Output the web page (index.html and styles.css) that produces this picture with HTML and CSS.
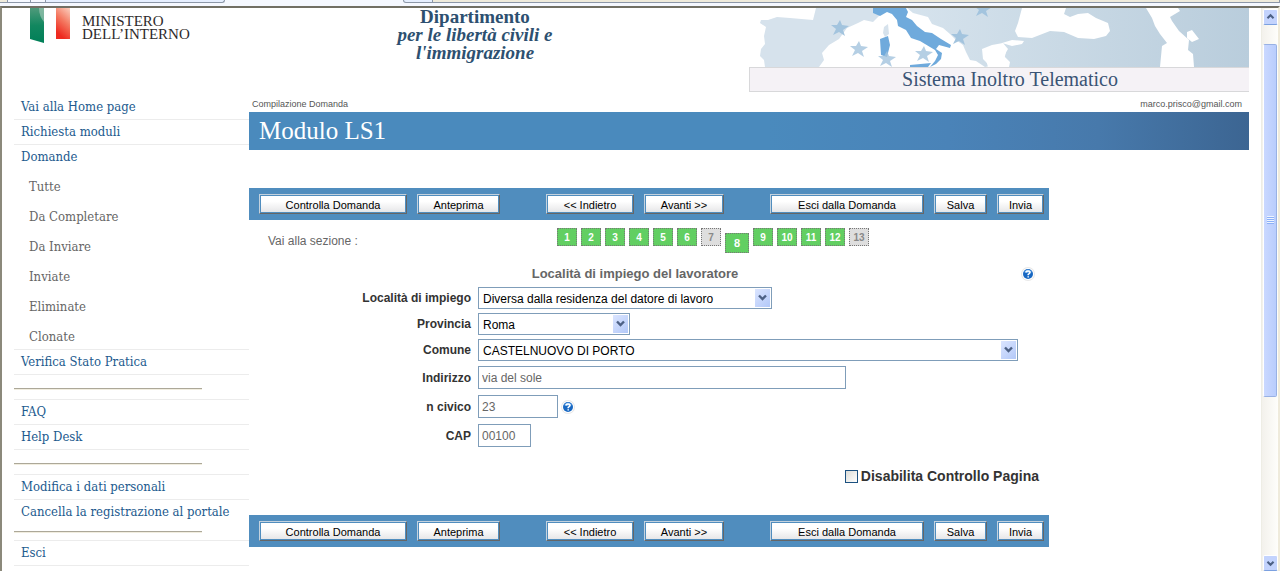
FILE: index.html
```html
<!DOCTYPE html>
<html lang="it">
<head>
<meta charset="utf-8">
<title>Modulo LS1 - Sistema Inoltro Telematico</title>
<link rel="stylesheet" href="styles.css">
</head>
<body>
<div class="tabstrip">
  <span class="tab tab-first"></span><span class="tab tab-small"></span><span class="tab tab-mini"></span><span class="tab tab-active"></span><span class="tab tab-space"></span><span class="tab tab-tool"></span><span class="tab tab-rest"></span>
</div>
<div class="frame">
  <div class="page">
    <header class="header">
      <div class="ministry">
        <svg class="flag" width="42" height="38" viewBox="0 0 42 38" aria-hidden="true">
          <defs>
            <linearGradient id="green" x1="0" y1="0" x2="0" y2="1"><stop offset="0" stop-color="#4f9a7b"/><stop offset=".5" stop-color="#12875f"/><stop offset="1" stop-color="#007f58"/></linearGradient>
            <linearGradient id="red" x1="1" y1="0" x2=".6" y2="1"><stop offset="0" stop-color="#fbd0c0"/><stop offset=".5" stop-color="#f47a62"/><stop offset="1" stop-color="#ee2a20"/></linearGradient>
          </defs>
          <path d="M0 0H14V35L0 31Z" fill="url(#green)"/>
          <path d="M9 0H14V14Q9 8 9 0Z" fill="#a9cdbd" opacity=".6"/>
          <path d="M26 0H40V31H26Z" fill="url(#red)"/>
        </svg>
        <div class="ministry-name">MINISTERO<br>DELL’INTERNO</div>
      </div>
      <div class="department">Dipartimento<br><em>per le libertà civili e<br>l'immigrazione</em></div>
      <div class="banner">
        <svg class="map" viewBox="749 8 500 59" preserveAspectRatio="none" aria-hidden="true">
          <defs>
            <linearGradient id="east" x1="0" x2="1"><stop offset="0" stop-color="#d6e3ed"/><stop offset=".45" stop-color="#c9d9e5"/><stop offset="1" stop-color="#b9cddc"/></linearGradient>
            <path id="star" d="M0-8 2-3 9-2 3 2 5 8-1 4-7 7-4 1-9-3-3-3Z"/>
          </defs>
          <path fill="#d6e2ec" d="M816 8 813 20 790 18 777 17 768 20 761 20 760 23 766 27 764 36 765 44 761 49 760 56 764 60 765 67H819L824 60 822 53 829 45 839 39 847 28 858 23 864 20 873 22 879 16 882 8Z"/>
          <path fill="url(#east)" d="M907 8 913 13 928 17 932 24 943 28 950 34 956 40 963 45 966 52 970 60 976 61 985 67 990 66 983 59 982 49 992 45 1003 43 1008 49 1004 56 1010 62 1009 67H1249V8Z"/>
          <path fill="#fff" d="M1022 8 1018 23 1015 31 1018 37 1032 38 1050 31 1064 32 1078 38 1094 39 1106 36 1110 31 1108 23 1096 18 1088 13 1078 14 1070 17 1064 14 1066 8ZM1002 43 1012 40 1024 41 1022 44 1012 46ZM1146 8 1152 18 1155 26 1160 34 1167 43 1162 46 1160 67H1194L1193 54 1188 50 1189 40 1179 31 1172 21 1170 17 1180 11 1178 8ZM1187 32 1192 30 1199 39 1192 42 1187 38Z"/>
          <path fill="#fff" d="M983 50 992 49 1003 43 1006 52 1004 60 1008 67H988Z"/>
          <path fill="#d6e2ec" d="M884 27 888 24 889 34 885 37 883 33Z"/>
          <path fill="#6faadc" d="M873 8 873 13 880 16 887 12 892 14 897 20 898 26 906 30 911 38 920 41 930 47 935 50 938 55 935 61 930 67 936 64 941 59 942 53 936 49 939 45 950 48 951 45 941 39 932 33 925 32 917 26 912 20 906 17 908 12 906 8ZM880 39 888 36 890 45 887 57 881 55ZM910 65 931 63 928 67H910Z"/>
          <g fill="#a3c4de"><use href="#star" x="840" y="28"/><use href="#star" x="960" y="37"/><use href="#star" x="983" y="9"/><g opacity=".8"><use href="#star" x="859" y="49"/><use href="#star" x="887" y="59"/><use href="#star" x="924" y="54"/></g></g>
        </svg>
        <div class="banner-title">Sistema Inoltro Telematico</div>
      </div>
    </header>
    <div class="columns">
      <nav class="menu">
        <a href="#">Vai alla Home page</a>
        <a href="#">Richiesta moduli</a>
        <a class="open" href="#">Domande</a>
        <div class="submenu">
          <a href="#">Tutte</a>
          <a href="#">Da Completare</a>
          <a href="#">Da Inviare</a>
          <a href="#">Inviate</a>
          <a href="#">Eliminate</a>
          <a href="#">Clonate</a>
        </div>
        <a href="#">Verifica Stato Pratica</a>
        <div class="divider"><hr></div>
        <a href="#">FAQ</a>
        <a href="#">Help Desk</a>
        <div class="divider"><hr></div>
        <a href="#">Modifica i dati personali</a>
        <a class="open" href="#">Cancella la registrazione al portale</a>
        <div class="divider divider-short"><hr></div>
        <a href="#">Esci</a>
      </nav>
      <main class="main">
        <div class="crumbs"><span>Compilazione Domanda</span><span>marco.prisco@gmail.com</span></div>
        <h1 class="title">Modulo LS1</h1>
        <form class="form">
          <div class="toolbar">
            <div class="group"><button type="button" class="w-check">Controlla Domanda</button><button type="button" class="w-preview">Anteprima</button></div>
            <div class="group"><button type="button" class="w-back">&lt;&lt; Indietro</button><button type="button" class="w-next">Avanti &gt;&gt;</button></div>
            <div class="group"><button type="button" class="w-exit">Esci dalla Domanda</button><button type="button" class="w-save">Salva</button><button type="button" class="w-send">Invia</button></div>
          </div>
          <div class="sections">
            <span class="sections-label">Vai alla sezione :</span>
            <div class="steps">
              <a href="#">1</a><a href="#">2</a><a href="#">3</a><a href="#">4</a><a href="#">5</a><a href="#">6</a><a class="off" href="#">7</a><a class="current" href="#">8</a><a href="#">9</a><a href="#">10</a><a href="#">11</a><a href="#">12</a><a class="off" href="#">13</a>
            </div>
          </div>
          <div class="subject">
            <h2>Località di impiego del lavoratore</h2>
            <svg class="help" viewBox="0 0 14 14" role="img" aria-label="Aiuto"><circle cx="7" cy="7" r="7" fill="#e8e8e8"/><circle cx="7" cy="7" r="6" fill="#fff"/><circle cx="7" cy="7" r="5" fill="#1767c2"/><path d="M3 5Q7 0 11 5Q7 7 3 5Z" fill="#5fa5e8"/><path d="M5 5.5Q5 4 7 4T9 5.6Q9 6.4 7.2 7.4V8.2M7.2 9.2V10.6" fill="none" stroke="#fff" stroke-width="1.5"/></svg>
          </div>
          <div class="field">
            <label for="luogo">Località di impiego</label>
            <span class="select w-place"><select id="luogo"><option>Diversa dalla residenza del datore di lavoro</option></select><svg class="arrow" viewBox="0 0 15 18" aria-hidden="true"><path d="M4 6.5 7.5 10 11 6.5" /></svg></span>
          </div>
          <div class="field">
            <label for="provincia">Provincia</label>
            <span class="select w-province"><select id="provincia"><option>Roma</option></select><svg class="arrow" viewBox="0 0 15 18" aria-hidden="true"><path d="M4 6.5 7.5 10 11 6.5" /></svg></span>
          </div>
          <div class="field">
            <label for="comune">Comune</label>
            <span class="select w-town"><select id="comune"><option>CASTELNUOVO DI PORTO</option></select><svg class="arrow" viewBox="0 0 15 18" aria-hidden="true"><path d="M4 6.5 7.5 10 11 6.5" /></svg></span>
          </div>
          <div class="field field-text">
            <label for="indirizzo">Indirizzo</label>
            <input class="w-street" type="text" id="indirizzo" value="via del sole">
          </div>
          <div class="field field-text">
            <label for="civico">n civico</label>
            <input class="w-number" type="text" id="civico" value="23">
            <svg class="help help-inline" viewBox="0 0 14 14" role="img" aria-label="Aiuto"><circle cx="7" cy="7" r="7" fill="#e8e8e8"/><circle cx="7" cy="7" r="6" fill="#fff"/><circle cx="7" cy="7" r="5" fill="#1767c2"/><path d="M3 5Q7 0 11 5Q7 7 3 5Z" fill="#5fa5e8"/><path d="M5 5.5Q5 4 7 4T9 5.6Q9 6.4 7.2 7.4V8.2M7.2 9.2V10.6" fill="none" stroke="#fff" stroke-width="1.5"/></svg>
          </div>
          <div class="field field-text">
            <label for="cap">CAP</label>
            <input class="w-zip" type="text" id="cap" value="00100">
          </div>
          <div class="disable"><input type="checkbox" id="disabilita"><label for="disabilita">Disabilita Controllo Pagina</label></div>
          <div class="toolbar">
            <div class="group"><button type="button" class="w-check">Controlla Domanda</button><button type="button" class="w-preview">Anteprima</button></div>
            <div class="group"><button type="button" class="w-back">&lt;&lt; Indietro</button><button type="button" class="w-next">Avanti &gt;&gt;</button></div>
            <div class="group"><button type="button" class="w-exit">Esci dalla Domanda</button><button type="button" class="w-save">Salva</button><button type="button" class="w-send">Invia</button></div>
          </div>
        </form>
      </main>
    </div>
  </div>
  <div class="scrollbar" aria-hidden="true">
    <svg class="scroll-btn" viewBox="0 0 15 15"><path d="M4 9 7.5 5.5 11 9"/></svg>
    <div class="track"><div class="thumb"><span class="grip"></span></div></div>
    <svg class="scroll-btn" viewBox="0 0 15 15"><path d="M4 6 7.5 9.5 11 6"/></svg>
  </div>
</div>
</body>
</html>
```
FILE: styles.css
```css
* { box-sizing: border-box; }

body {
  margin: 0;
  height: 100vh;
  overflow: hidden;
  display: flex;
  flex-direction: column;
  background: #fff;
  color: #666;
  font: 12px/16px "Liberation Sans", Arial, sans-serif;
}

a { text-decoration: none; }

/* Browser chrome above the page */
.tabstrip { display: flex; flex: none; height: 6px; padding-bottom: 3px; background: #f5f8ff; }
.tab { border-bottom: 1px solid #8c97a8; border-right: 1px solid #8c97a8; background: #e6efff; }
.tab-first { width: 8px; background: #efebdc; }
.tab-small { width: 23px; background: #f5f8ff; }
.tab-mini { width: 15px; background: #f5f8ff; }
.tab-active { width: 179px; border-radius: 0 0 3px 0; }
.tab-space { width: 178px; border: 0; background: #f5f8ff; }
.tab-tool { width: 30px; border-left: 1px solid #8c97a8; border-radius: 0 0 0 3px; }
.tab-rest { flex: 1; background: #efebdc; }

.frame {
  flex: 1;
  min-height: 0;
  display: flex;
  border-top: 2px solid #716f64;
  border-left: 2px solid #8b897b;
  border-right: 2px solid #efebdc;
}
.page { flex: 1; min-width: 0; padding: 0 12px; overflow: hidden; }

/* Header */
.header { display: flex; height: 87px; }
.ministry { display: flex; width: 364px; padding-left: 16px; gap: 10px; }
.flag { flex: none; }
.ministry-name { padding-top: 7px; font: 15px/13px "Liberation Serif", serif; color: #2e2a2b; }
.department {
  width: 194px;
  text-align: center;
  white-space: nowrap;
  font: bold 19px/18px "Liberation Serif", serif;
  color: #2d5070;
}
.banner { width: 500px; margin-left: auto; }
.map { display: block; width: 100%; height: 59px; }
.banner-title {
  height: 25px;
  padding-right: 131px;
  border: 1px solid #d8d8da;
  border-right: 0;
  background: #f5f2f6;
  text-align: right;
  font: 20px/23px "Liberation Serif", serif;
  color: #3a5475;
}

/* Left menu */
.columns { display: flex; }
.menu { flex: none; width: 235px; font: 13px/24px "DejaVu Serif Condensed", "DejaVu Serif", serif; }
.menu a { display: block; height: 25px; padding-left: 7px; border-bottom: 1px solid #ececec; color: #225a8e; white-space: nowrap; }
.menu .open { border-bottom: 0; }
.submenu { border-bottom: 1px solid #ececec; line-height: 30px; }
.submenu a { height: 30px; padding-left: 15px; border-bottom: 0; color: #666; }
.submenu a:first-child { margin-top: 2px; }
.submenu a:last-child { height: 27px; }
.divider { height: 25px; padding-top: 13px; border-bottom: 1px solid #ececec; }
.divider-short { height: 16px; padding-top: 6px; }
.divider hr { width: 80%; height: 2px; margin: 0; border: 0; border-top: 1px solid #aca899; background: #f1eddf; }

/* Main column */
.main { flex: 1; min-width: 0; }
.crumbs { display: flex; justify-content: space-between; height: 17px; padding: 0 7px 0 3px; font-size: 9px; line-height: 19px; color: #555; }
.title {
  height: 38px;
  margin: 0 0 38px;
  padding-left: 10px;
  background: linear-gradient(90deg, #4a8abd 0 52%, #4a83b8 70%, #4779ab 85%, #3c6592);
  color: #fff;
  font: 25px/38px "Liberation Serif", serif;
}
.form { width: 80%; }
.toolbar { display: flex; justify-content: space-between; height: 32px; padding: 6px 5px 6px 10px; background: #508dbe; }
.group { display: flex; gap: 10px; }
.toolbar button {
  height: 20px;
  padding: 3px 0 0;
  border: 1px solid;
  border-color: #c4d2de #666 #666 #c4d2de;
  box-shadow: inset 0 0 0 1px #508dbe;
  background: linear-gradient(#fff 35%, #e4e4e6);
  color: #000;
  font: 11px/13px "Liberation Sans", Arial, sans-serif;
}
.w-check { width: 148px; }
.w-preview { width: 83px; }
.w-back { width: 88px; }
.w-next { width: 80px; }
.w-exit { width: 154px; }
.w-save { width: 53px; }
.w-send { width: 47px; }

.sections { display: flex; height: 42px; padding-top: 8px; }
.sections-label { width: 308px; padding: 5px 0 0 19px; }
.steps { display: flex; gap: 4px; align-items: flex-start; }
.steps a {
  width: 20px;
  height: 18px;
  border: 1px dotted #777;
  background: #62cf62;
  color: #fff;
  font-weight: bold;
  font-size: 10px;
  line-height: 17px;
  text-align: center;
}
.steps .off { background: #dedede; color: #888; }
.steps .current { width: 24px; height: 20px; margin-top: 5px; font-size: 11px; line-height: 19px; }

.subject { display: flex; align-items: center; height: 23px; padding-right: 14px; }
.subject h2 { flex: 1; margin: 0; text-align: center; font-size: 13px; line-height: 16px; }
.help { flex: none; width: 14px; height: 14px; }
.help-inline { margin-left: 3px; }

.field { display: flex; align-items: center; height: 26px; }
.field-text { height: 29px; }
.field label { width: 222px; margin-right: 7px; text-align: right; font-weight: bold; color: #333; }
.select { position: relative; height: 22px; }
.select select {
  appearance: none;
  width: 100%;
  height: 22px;
  margin: 0;
  padding: 1px 20px 0 4px;
  border: 1px solid #7f9db9;
  border-radius: 0;
  background: #fff;
  color: #000;
  font: 12px/18px "Liberation Sans", Arial, sans-serif;
}
.arrow { position: absolute; top: 2px; right: 2px; width: 15px; height: 18px; background: linear-gradient(135deg, #dbe5ff, #b2c8f8); pointer-events: none; }
.arrow path, .scroll-btn path { fill: none; stroke: #4d6185; stroke-width: 2.4; }
.field input {
  height: 23px;
  padding: 0 3px;
  border: 1px solid #7f9db9;
  background: #fff;
  color: #666;
  font: 12px/18px "Liberation Sans", Arial, sans-serif;
}
.w-place { width: 294px; }
.w-province { width: 152px; }
.w-town { width: 540px; }
.field .w-street { width: 368px; }
.field .w-number { width: 80px; }
.field .w-zip { width: 53px; }

.disable { display: flex; align-items: center; justify-content: flex-end; gap: 3px; height: 16px; margin: 18px 0 31px; padding-right: 10px; color: #333; font-weight: bold; font-size: 14px; }
.disable input { appearance: none; width: 13px; height: 13px; margin: 0; border: 1px solid #1c5180; background: linear-gradient(135deg, #dcdcd7, #fff); }

/* Window scrollbar */
.scrollbar { display: flex; flex-direction: column; flex: none; width: 17px; padding: 1px 1px 0; border-left: 1px solid #eeede5; background: linear-gradient(90deg, #f3f1ec, #fefefb); }
.scroll-btn { flex: none; width: 15px; height: 16px; border: 1px solid #fff; border-bottom-color: #7ba0e0; border-radius: 2px; background: #c3d3fd; }
.track { flex: 1; min-height: 0; padding-top: 19px; }
.thumb { display: flex; align-items: center; justify-content: center; height: 69%; border: 1px solid #98b1e4; border-left-color: #fff; border-radius: 2px; background: linear-gradient(90deg, #cad8ff, #b9cdfd); }
.grip { width: 7px; height: 8px; background: repeating-linear-gradient(#eef4ff 0 1px, #8cb0f8 1px 2px); }
```
